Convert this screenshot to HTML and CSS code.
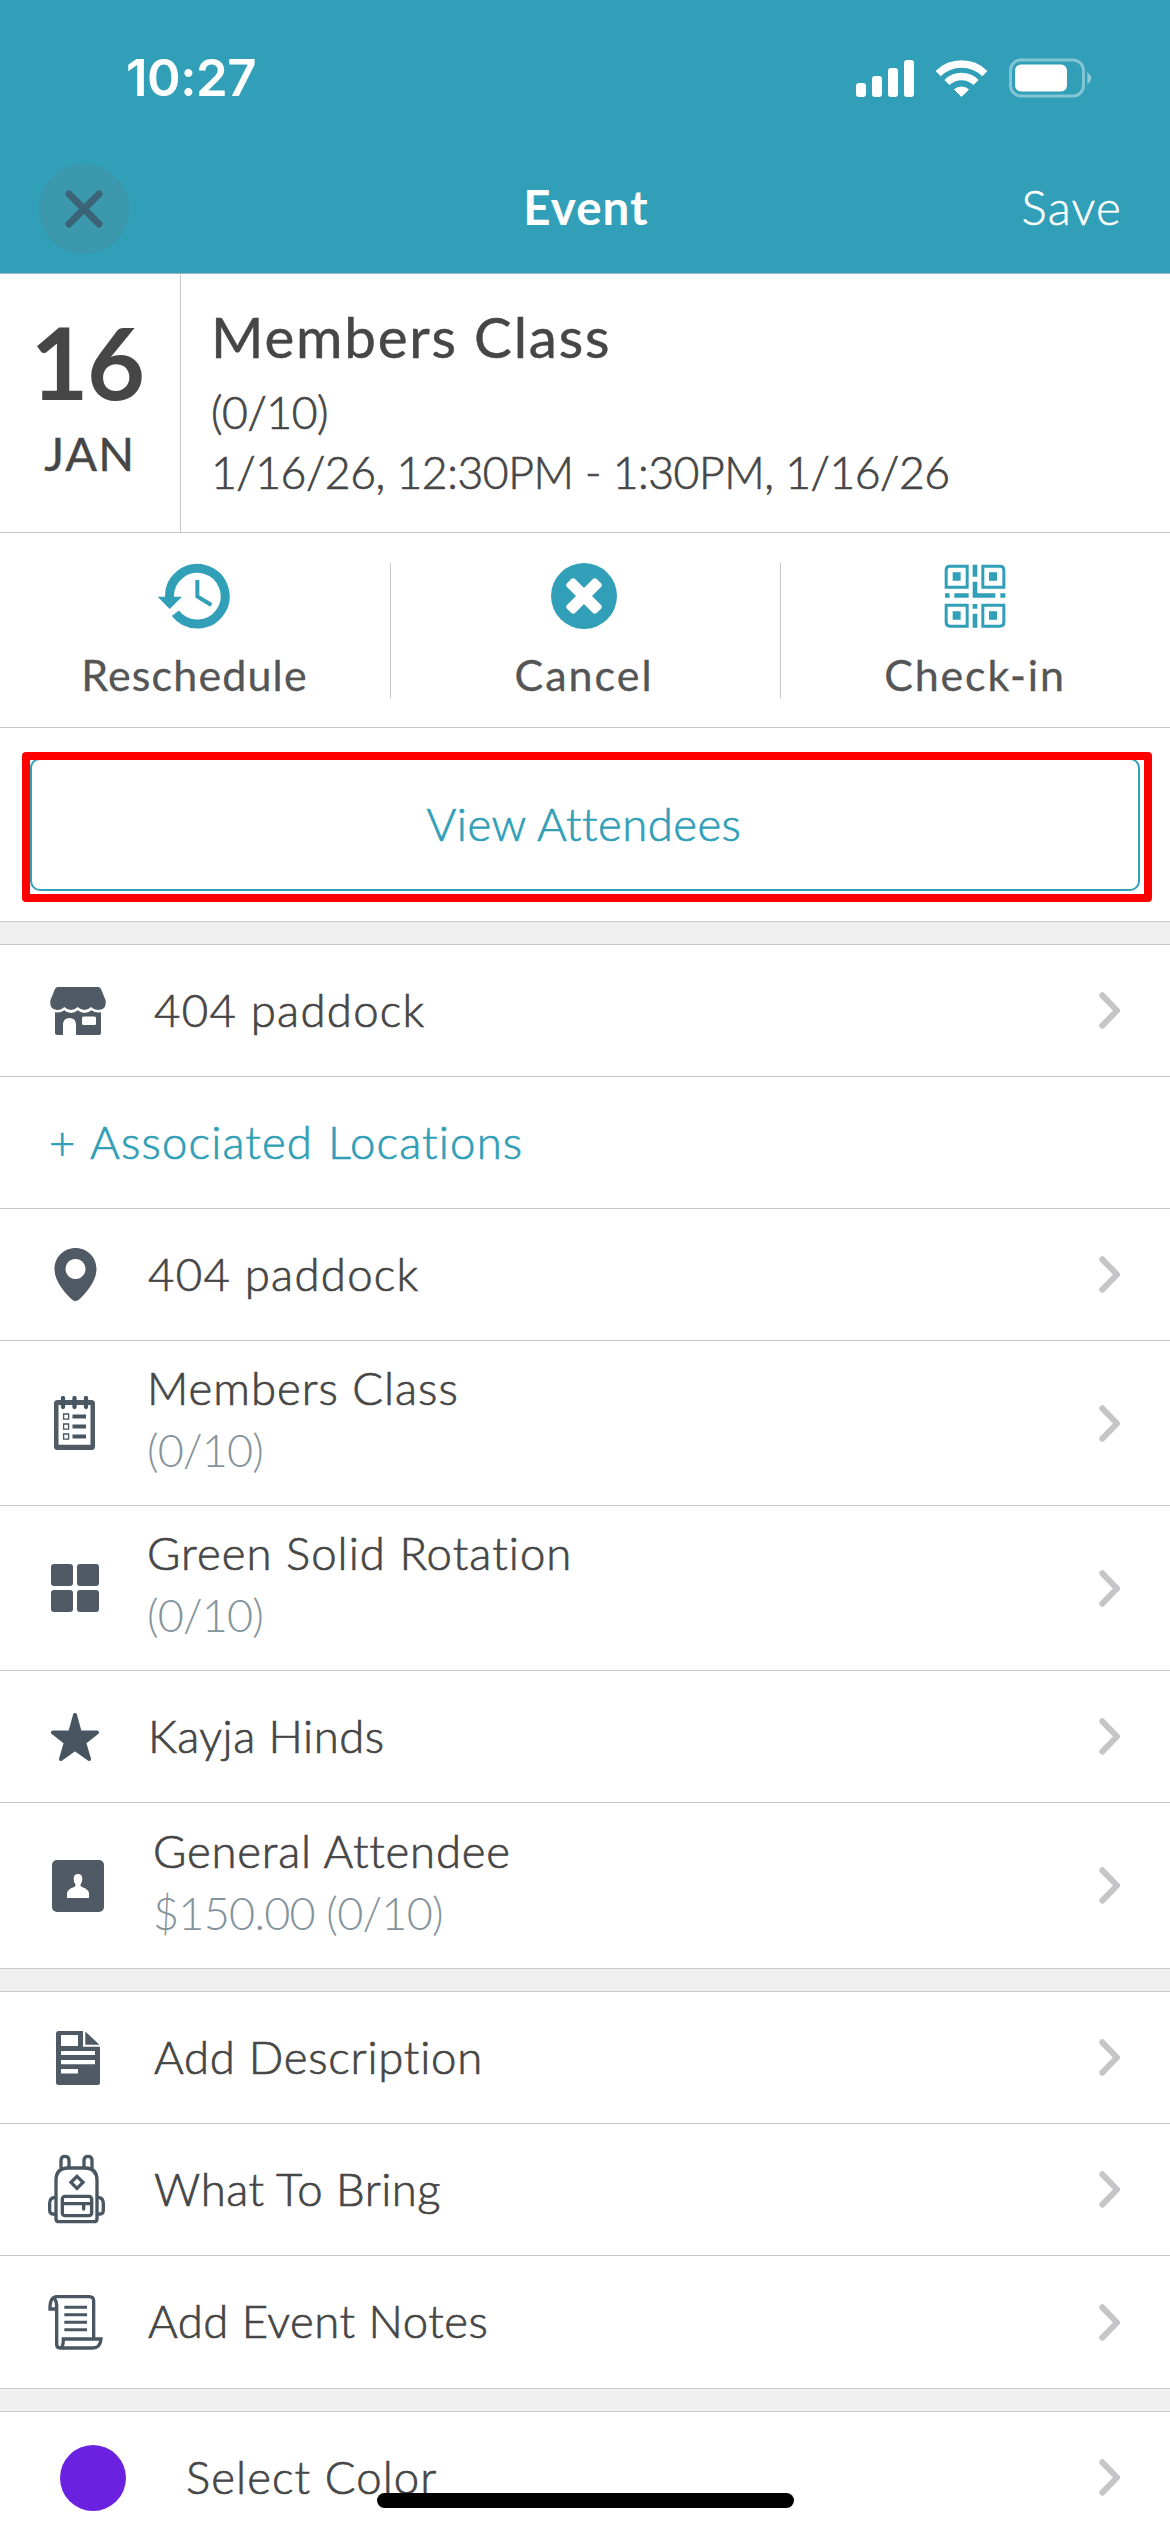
FILE: index.html
```html
<!DOCTYPE html>
<html lang="en">
<head>
<meta charset="utf-8">
<title>Event</title>
<link rel="stylesheet" href="styles.css">
</head>
<body>
<svg width="0" height="0" class="sprite" aria-hidden="true">
  <symbol id="chevron" viewBox="0 0 22 37">
    <path d="M3.3 3.3 18 18.5 3.3 33.7" fill="none" stroke="#c5c5c7" stroke-width="6" stroke-linecap="round" stroke-linejoin="round"/>
  </symbol>
</svg>
<div class="app">
  <header class="header">
    <div class="status">
      <span class="status-time">10:27</span>
      <div class="status-icons">
        <svg width="58" height="37" viewBox="0 0 58 37" fill="#fff">
          <rect x="0" y="23" width="10" height="14" rx="3"/><rect x="16" y="16" width="10" height="21" rx="3"/><rect x="32" y="8" width="10" height="29" rx="3"/><rect x="48" y="0" width="10" height="37" rx="3"/>
        </svg>
        <svg width="51" height="37" viewBox="0 0 51 37" fill="none" stroke="#fff">
          <path d="M2.2 13.7A33 33 0 0 1 48.8 13.7" stroke-width="7.4"/>
          <path d="M11 22.5A20.5 20.5 0 0 1 40 22.5" stroke-width="7.4"/>
          <path d="M18.5 29.5A11 11 0 0 1 32.5 29.5L25.5 36.5Z" fill="#fff" stroke-width="1" stroke-linejoin="round"/>
        </svg>
        <svg width="83" height="40" viewBox="0 0 83 40">
          <rect x="1.5" y="2" width="73" height="36" rx="10.5" fill="none" stroke="#fff" stroke-opacity=".4" stroke-width="3"/>
          <path d="M78.3 14.5Q82.3 17 82.3 20T78.3 26.5Z" fill="#fff" fill-opacity=".45"/>
          <rect x="6" y="6.5" width="52" height="27" rx="6" fill="#fff"/>
        </svg>
      </div>
    </div>
    <nav class="nav">
      <button class="close" aria-label="Close">
        <svg width="38" height="38" viewBox="0 0 38 38"><path d="M4 4 34 34M34 4 4 34" stroke="#3b6476" stroke-width="7" stroke-linecap="round"/></svg>
      </button>
      <h1 class="nav-title">Event</h1>
      <span class="save">Save</span>
    </nav>
  </header>

  <section class="summary">
    <div class="date">
      <div class="day">16</div>
      <div class="month">JAN</div>
    </div>
    <div class="details">
      <h2 class="event-name">Members Class</h2>
      <div class="meta">(0/10)</div>
      <div class="meta">1/16/26, 12:30PM - 1:30PM, 1/16/26</div>
    </div>
  </section>

  <section class="actions">
    <div class="action reschedule">
      <svg width="90" height="66" viewBox="0 39 270 198" fill="#319fb7">
        <path d="M58.5 142A83.5 83.5 0 1 1 76 190" fill="none" stroke="#319fb7" stroke-width="27"/>
        <path d="M23 140H96L59 177Z"/>
        <path d="M142 90V139L184 165" fill="none" stroke="#319fb7" stroke-width="12"/>
      </svg>
      <span class="action-label">Reschedule</span>
    </div>
    <div class="action cancel">
      <svg width="66" height="66" viewBox="-33 -33 66 66">
        <circle r="33" fill="#319fb7"/>
        <g fill="#fff" transform="rotate(45)"><rect x="-21" y="-5.7" width="42" height="11.4" rx="3"/><rect x="-5.7" y="-21" width="11.4" height="42" rx="3"/></g>
      </svg>
      <span class="action-label">Cancel</span>
    </div>
    <div class="action checkin">
      <svg width="66" height="66" viewBox="65 70 198 198" fill="#319fb7">
        <g fill="none" stroke="#319fb7" stroke-width="9">
          <path d="M140.500 142.500H77.500V91Q77.500 79.500 89 79.500H140.500Z"/>
          <path d="M187.500 142.500V79.500H239Q250.500 79.500 250.500 91V142.500Z"/>
          <path d="M140.500 196.500V259.500H89Q77.500 259.500 77.500 248V196.500Z"/>
          <path d="M187.500 196.500H250.500V248Q250.500 259.500 239 259.500H187.500Z"/>
        </g>
        <path d="M97 98h24v25h-24zM206 98h24v25h-24zM97 215h24v25h-24zM206 215h24v25h-24zM157 75h14v36h-14zM157 126h14v35h54v13h-68zM74 161h14v13h-14zM102 161h43v13h-43zM240 161h15v13h-15zM157 193h14v14h-14zM157 222h14v42h-14z"/>
      </svg>
      <span class="action-label">Check-in</span>
    </div>
  </section>

  <section class="attendees">
    <button class="attendees-button">View Attendees</button>
    <div class="highlight"></div>
  </section>

  <div class="gap"></div>

  <section class="list">
    <div class="row wide store">
      <div class="icon"><svg width="56" height="48" viewBox="0 0 56 48">
        <path d="M8 0H48Q50 0 51 2L55.500 13Q57 22 49 23Q44 23 41 20Q38 23 34.500 23T27.700 20Q24.500 23 21 23T14.300 20Q11.500 23 7 23Q-1 22 .5 13L5 2Q6 0 8 0Z"/>
        <path fill-rule="evenodd" d="M5 25.300Q11 26 14.300 23.200Q17 26 21 26T27.700 23.200Q31 26 34.500 26T41.500 23.200Q45 26 51 25.300V46Q51 48 49 48H26V37Q25.500 31 19.500 31T13 37V48H7Q5 48 5 46ZM33.500 29.500Q32 29.500 32 31V36.500Q32 38 33.500 38H44.500Q46 38 46 36.500V31Q46 29.500 44.500 29.500Z"/>
      </svg></div>
      <div class="text"><div class="title">404 paddock</div></div>
      <svg class="chevron" width="22" height="37"><use href="#chevron"/></svg>
    </div>
    <div class="row link-row"><div class="title">+ Associated Locations</div></div>
    <div class="row place">
      <div class="icon"><svg width="43" height="54" viewBox="0 0 43 54">
        <path fill-rule="evenodd" d="M21.500 0C33 0 42.500 9 42.500 21C42.500 34 31.500 45.500 24.500 52Q21.500 54 18.500 52C11.500 45.500 .5 34 .5 21C.5 9 10 0 21.500 0ZM21.500 11a10 10 0 1 0 .01 0Z"/>
      </svg></div>
      <div class="text"><div class="title">404 paddock</div></div>
      <svg class="chevron" width="22" height="37"><use href="#chevron"/></svg>
    </div>
    <div class="row double class">
      <div class="icon"><svg width="41" height="54" viewBox="0 0 41 54">
        <path fill-rule="evenodd" d="M3.500 4H37.500Q41 4 41 7.500V50.500Q41 54 37.500 54H3.500Q0 54 0 50.500V7.500Q0 4 3.500 4ZM4.500 9V48.800H36.500V9Z"/>
        <path d="M9 2V11M20.500 2V11M32 2V11" stroke="#465560" stroke-width="4.300" stroke-linecap="round"/>
        <path d="M18.500 20.500H32M18.500 30.500H32M18.500 40.500H32" stroke="#465560" stroke-width="4.200"/>
        <path d="M9.600 18h5v5.200h-5zM9.600 28h5v5.200h-5zM9.600 38h5v5.200h-5z" fill="none" stroke="#465560" stroke-width="1.300"/>
      </svg></div>
      <div class="text"><div class="title">Members Class</div><div class="sub">(0/10)</div></div>
      <svg class="chevron" width="22" height="37"><use href="#chevron"/></svg>
    </div>
    <div class="row double rotation">
      <div class="icon"><svg width="48" height="48" viewBox="0 0 48 48">
        <rect width="22" height="22" rx="3"/><rect x="26" width="22" height="22" rx="3"/><rect y="26" width="22" height="22" rx="3"/><rect x="26" y="26" width="22" height="22" rx="3"/>
      </svg></div>
      <div class="text"><div class="title">Green Solid Rotation</div><div class="sub">(0/10)</div></div>
      <svg class="chevron" width="22" height="37"><use href="#chevron"/></svg>
    </div>
    <div class="row staff">
      <div class="icon"><svg width="48" height="48" viewBox="0 0 48 48">
        <path class="star" d="M24 2 28.800 19.500H46L33.200 29.500 38 46 24 35.800 10 46 14.800 29.500 2 19.500H19.200Z"/>
      </svg></div>
      <div class="text"><div class="title">Kayja Hinds</div></div>
      <svg class="chevron" width="22" height="37"><use href="#chevron"/></svg>
    </div>
    <div class="row double wide ticket">
      <div class="icon"><svg width="52" height="52" viewBox="0 0 52 52">
        <rect width="52" height="52" rx="5"/>
        <path fill="#fff" d="M15 38V33.500Q15 29.500 22 27Q24 26.300 23.500 24.500Q21.700 22.500 21.700 19Q21.700 14 26 14T30.300 19Q30.300 22.500 28.500 24.500Q28 26.300 30 27Q37 29.500 37 33.500V38Z"/>
      </svg></div>
      <div class="text"><div class="title">General Attendee</div><div class="sub">$150.00 (0/10)</div></div>
      <svg class="chevron" width="22" height="37"><use href="#chevron"/></svg>
    </div>
  </section>

  <div class="gap"></div>

  <section class="list">
    <div class="row wide description">
      <div class="icon"><svg width="44" height="54" viewBox="0 0 44 54">
        <path fill-rule="evenodd" d="M2.500 0H27V15.800H44V51.500Q44 54 41.500 54H2.500Q0 54 0 51.500V2.500Q0 0 2.500 0ZM5 4V15H22V4ZM5 20V24H39V20ZM5 29V33.300H39V29ZM5 38V42.500H22V38Z"/>
        <path d="M29.300 .5 43.500 13.800H29.300Z"/>
      </svg></div>
      <div class="text"><div class="title">Add Description</div></div>
      <svg class="chevron" width="22" height="37"><use href="#chevron"/></svg>
    </div>
    <div class="row wide bring">
      <div class="icon"><svg width="59" height="70" viewBox="21 41 177 210" class="line">
        <path d="M48 235V120Q48 83 84 83H136Q171 83 171 120V235Q171 244 162 244H57Q48 244 48 235Z"/>
        <path d="M63 84V60Q63 48 75 48T87 60V82M132 82V60Q132 48 144 48T156 60V84"/>
        <path d="M48 171H44Q29 173 29 189V210Q29 222 42 221L48 224M171 171H175Q190 173 190 189V210Q190 222 177 221L171 224"/>
        <path d="M111 108 129 126 111 144 93 126Z"/>
        <rect x="67" y="168" width="88" height="58" rx="8"/>
        <path d="M67 190H155M131 190V206" stroke-linecap="round"/>
      </svg></div>
      <div class="text"><div class="title">What To Bring</div></div>
      <svg class="chevron" width="22" height="37"><use href="#chevron"/></svg>
    </div>
    <div class="row notes">
      <div class="icon"><svg width="55" height="55" viewBox="23 464 165 165" class="line">
        <path d="M50 506H29Q28 469 50 469H147Q160 469 160 482V594"/>
        <path d="M42 474Q49 482 49 495V612Q49 623 59 623H156Q180 623 182 596H69Q69 623 59 623"/>
        <path d="M72 501H140M72 523H140M72 546H140M72 568H140" stroke-width="9"/>
      </svg></div>
      <div class="text"><div class="title">Add Event Notes</div></div>
      <svg class="chevron" width="22" height="37"><use href="#chevron"/></svg>
    </div>
  </section>

  <div class="gap"></div>

  <section class="list">
    <div class="row color">
      <div class="icon"><span class="swatch"></span></div>
      <div class="text"><div class="title">Select Color</div></div>
      <svg class="chevron" width="22" height="37"><use href="#chevron"/></svg>
    </div>
  </section>
  <div class="home-indicator"></div>
</div>
</body>
</html>
```
FILE: styles.css
```css
* { box-sizing: border-box; }

body {
  margin: 0;
  background: #fff;
  color: #464646;
  font-family: Lato, "Open Sans", sans-serif;
}

button { font: inherit; border: 0; padding: 0; background: none; }
svg { display: block; flex: none; }
.sprite { position: absolute; }

.app {
  position: relative;
  width: 1170px;
  height: 2532px;
  overflow: hidden;
  background: #fff;
}

/* Header */
.header {
  height: 274px;
  background: #319fb7;
  border-bottom: 1px solid #9ab5bb;
  color: #fff;
}
.status {
  display: flex;
  align-items: center;
  justify-content: space-between;
  height: 156px;
  padding: 0 78px 0 126px;
}
.status-time {
  font: 600 51px/60px Inter, sans-serif;
  letter-spacing: -0.5px;
}
.status-icons { display: flex; align-items: center; gap: 22px; }
.nav {
  display: grid;
  grid-template-columns: 1fr auto 1fr;
  align-items: center;
  height: 117px;
  padding: 0 39px 11px;
}
.close {
  display: flex;
  align-items: center;
  justify-content: center;
  width: 90px;
  height: 90px;
  border-radius: 50%;
  background: #3b98ad;
}
.nav-title {
  margin: 0;
  padding: 0 0 4px 2px;
  font-size: 47.5px;
  line-height: 56px;
  letter-spacing: 1px;
}
.save {
  justify-self: end;
  padding: 0 9px 4px 0;
  font-size: 47.5px;
  font-weight: 300;
  line-height: 56px;
  letter-spacing: 1.2px;
  -webkit-text-stroke: 0.5px;
}

/* Date and event name */
.summary {
  display: flex;
  height: 259px;
  border-bottom: 1px solid #c8c8ca;
}
.date {
  width: 181px;
  padding-top: 37px;
  border-right: 1px solid #c8c8ca;
  text-align: center;
}
.day {
  padding-right: 6px;
  font-size: 100px;
  font-weight: 700;
  line-height: 100px;
  letter-spacing: -1.5px;
}
.month {
  margin-top: 14px;
  font-size: 47px;
  line-height: 56px;
  letter-spacing: 1.4px;
  -webkit-text-stroke: 0.4px;
}
.details { padding: 29px 0 0 30px; }
.event-name {
  margin: 0 0 13px;
  font-size: 56.5px;
  font-weight: 400;
  line-height: 66px;
  letter-spacing: 1.8px;
  -webkit-text-stroke: 0.5px;
}
.meta {
  font-size: 44.5px;
  font-weight: 300;
  line-height: 60px;
  letter-spacing: -0.45px;
  -webkit-text-stroke: 0.7px;
}

/* Actions */
.actions {
  display: grid;
  grid-template-columns: repeat(3, 390px);
  height: 195px;
  padding: 30px 0;
  border-bottom: 1px solid #c8c8ca;
  color: #555;
}
.action {
  display: flex;
  flex-direction: column;
  align-items: center;
  gap: 22px;
  height: 135px;
  padding-right: 1px;
}
.action + .action { border-left: 1px solid #c8c8ca; }
.action.cancel { padding-right: 3px; }
.action-label { font-size: 43px; line-height: 47px; -webkit-text-stroke: 0.3px; }
.reschedule .action-label { letter-spacing: 1.15px; }
.cancel .action-label { letter-spacing: 2px; }
.checkin .action-label { letter-spacing: 1.8px; }

/* Attendees button */
.attendees {
  position: relative;
  height: 194px;
  padding: 30px;
  border-bottom: 1px solid #c8c8ca;
}
.attendees-button {
  display: block;
  width: 1110px;
  height: 133px;
  padding: 0 2px 2px 0;
  border: 2px solid #319fb7;
  border-radius: 10px;
  color: #319fb7;
  font-size: 45.5px;
  font-weight: 300;
  letter-spacing: 0.45px;
  -webkit-text-stroke: 0.7px;
}
.highlight {
  position: absolute;
  top: 24px;
  left: 22px;
  width: 1130px;
  height: 150px;
  border: 8px solid #f00;
  border-radius: 4px;
}

/* Lists */
.gap { height: 23px; background: #f0f0f0; border-bottom: 1px solid #c8c8ca; }
.row {
  display: flex;
  align-items: center;
  height: 132px;
  padding-right: 49px;
  border-bottom: 1px solid #c8c8ca;
}
.row.double { height: 165px; }
.row.double.ticket { height: 166px; }
.row.notes { height: 133px; }
.icon {
  display: flex;
  flex: none;
  justify-content: center;
  width: 150px;
  fill: #4f5a65;
}
.wide .icon { width: 156px; }
.bring .icon { padding: 0 3px 2px 0; }
.class .icon { padding-right: 1px; }
.color .icon { width: 186px; }
.text { flex: 1; margin-left: -2px; padding-bottom: 2px; }
.double .text { margin-left: -3px; padding-bottom: 8px; }
.color .text { margin-left: 0; }
.title {
  font-size: 45.5px;
  font-weight: 300;
  line-height: 62px;
  -webkit-text-stroke: 0.7px;
}
.sub {
  color: #84949c;
  font-size: 45px;
  font-weight: 300;
  line-height: 62px;
  letter-spacing: -0.85px;
}
.line { fill: none; stroke: #4a5762; stroke-width: 10; }
.star { fill: #465560; stroke: #465560; stroke-width: 4; stroke-linejoin: round; }
.swatch { width: 66px; height: 66px; border-radius: 50%; background: #6b22e0; }

.store .title, .place .title { letter-spacing: 1.3px; }
.link-row { padding-left: 49px; color: #319fb7; }
.link-row .title { padding-bottom: 2px; letter-spacing: 1.15px; word-spacing: 1.5px; }
.class .title { letter-spacing: 1px; }
.rotation .title { letter-spacing: 1.05px; }
.staff .title { letter-spacing: 0.5px; }
.ticket .title { letter-spacing: 0.8px; }
.ticket .sub { letter-spacing: -0.75px; }
.description .title { letter-spacing: 0.75px; }
.bring .title { letter-spacing: 0.5px; }
.notes .title { letter-spacing: 0.5px; }
.color .title { letter-spacing: 1.1px; }

.home-indicator {
  position: absolute;
  left: 377px;
  bottom: 24px;
  width: 417px;
  height: 15px;
  border-radius: 8px;
  background: #000;
}
```
